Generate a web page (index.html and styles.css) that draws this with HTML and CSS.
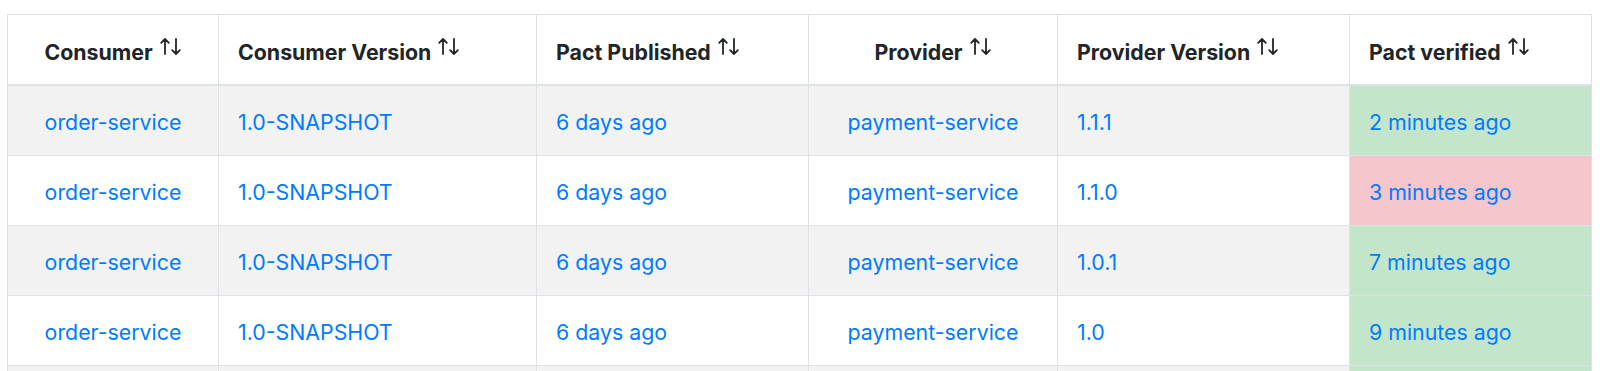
FILE: index.html
```html
<!DOCTYPE html>
<html lang="en">
<head>
<meta charset="utf-8">
<title>Pacts</title>
<link rel="stylesheet" href="styles.css">
</head>
<body>
<table class="pacts">
  <colgroup>
    <col class="c1"><col class="c2"><col class="c3"><col class="c4"><col class="c5"><col class="c6">
  </colgroup>
  <thead>
    <tr>
      <th class="center">Consumer<svg class="sort" viewBox="0 0 22 19"><path d="M5 17V2M1.2 5.8L5 2l3.8 3.8M16 2v15M12.2 13.2L16 17l3.8-3.8"/></svg></th>
      <th>Consumer Version<svg class="sort" viewBox="0 0 22 19"><path d="M5 17V2M1.2 5.8L5 2l3.8 3.8M16 2v15M12.2 13.2L16 17l3.8-3.8"/></svg></th>
      <th>Pact Published<svg class="sort" viewBox="0 0 22 19"><path d="M5 17V2M1.2 5.8L5 2l3.8 3.8M16 2v15M12.2 13.2L16 17l3.8-3.8"/></svg></th>
      <th class="center">Provider<svg class="sort" viewBox="0 0 22 19"><path d="M5 17V2M1.2 5.8L5 2l3.8 3.8M16 2v15M12.2 13.2L16 17l3.8-3.8"/></svg></th>
      <th>Provider Version<svg class="sort" viewBox="0 0 22 19"><path d="M5 17V2M1.2 5.8L5 2l3.8 3.8M16 2v15M12.2 13.2L16 17l3.8-3.8"/></svg></th>
      <th>Pact verified<svg class="sort" viewBox="0 0 22 19"><path d="M5 17V2M1.2 5.8L5 2l3.8 3.8M16 2v15M12.2 13.2L16 17l3.8-3.8"/></svg></th>
    </tr>
  </thead>
  <tbody>
    <tr>
      <td class="center"><a href="#">order-service</a></td>
      <td><a href="#">1.0-SNAPSHOT</a></td>
      <td><a href="#">6 days ago</a></td>
      <td class="center"><a href="#">payment-service</a></td>
      <td><a href="#">1.1.1</a></td>
      <td class="success"><a href="#">2 minutes ago</a></td>
    </tr>
    <tr>
      <td class="center"><a href="#">order-service</a></td>
      <td><a href="#">1.0-SNAPSHOT</a></td>
      <td><a href="#">6 days ago</a></td>
      <td class="center"><a href="#">payment-service</a></td>
      <td><a href="#">1.1.0</a></td>
      <td class="danger"><a href="#">3 minutes ago</a></td>
    </tr>
    <tr>
      <td class="center"><a href="#">order-service</a></td>
      <td><a href="#">1.0-SNAPSHOT</a></td>
      <td><a href="#">6 days ago</a></td>
      <td class="center"><a href="#">payment-service</a></td>
      <td><a href="#">1.0.1</a></td>
      <td class="success"><a href="#">7 minutes ago</a></td>
    </tr>
    <tr>
      <td class="center"><a href="#">order-service</a></td>
      <td><a href="#">1.0-SNAPSHOT</a></td>
      <td><a href="#">6 days ago</a></td>
      <td class="center"><a href="#">payment-service</a></td>
      <td><a href="#">1.0</a></td>
      <td class="success"><a href="#">9 minutes ago</a></td>
    </tr>
    <tr>
      <td class="center"></td>
      <td></td>
      <td></td>
      <td class="center"></td>
      <td></td>
      <td class="success"></td>
    </tr>
  </tbody>
</table>
</body>
</html>
```

FILE: styles.css
```css
html, body {
  margin: 0;
  padding: 0;
  background: #ffffff;
  overflow: hidden;
}
body {
  font-family: Inter, "Liberation Sans", Arial, sans-serif;
  font-size: 21.33px;
  color: #212529;
}
.pacts {
  margin: 14px 0 0 7px;
  width: 1584px;
  border-collapse: collapse;
  table-layout: fixed;
}
.c1 { width: 211px; }
.c2 { width: 318px; }
.c3 { width: 272px; }
.c4 { width: 249px; }
.c5 { width: 292px; }
.c6 { width: 242px; }
.pacts th,
.pacts td {
  border: 1px solid #dee2e6;
  padding: 2px 0 0 19px;
  text-align: left;
  vertical-align: middle;
  white-space: nowrap;
}
.pacts th {
  height: 67px;
  font-weight: 700;
  border-bottom: 2px solid #dee2e6;
}
.pacts td {
  height: 67px;
}
.pacts .center {
  text-align: center;
  padding: 2px 0 0;
}
.pacts tbody tr:nth-child(odd) td {
  background: #f2f2f2;
}
.pacts tbody tr td.success {
  background: #c3e6cb;
}
.pacts tbody tr td.danger {
  background: #f5c6cb;
}
.pacts a {
  color: #007bff;
  text-decoration: none;
}
.sort {
  width: 22px;
  height: 19px;
  margin-left: 7px;
  vertical-align: 4px;
  fill: none;
  stroke: #212529;
  stroke-width: 1.8;
  stroke-linecap: round;
  stroke-linejoin: round;
}
```
